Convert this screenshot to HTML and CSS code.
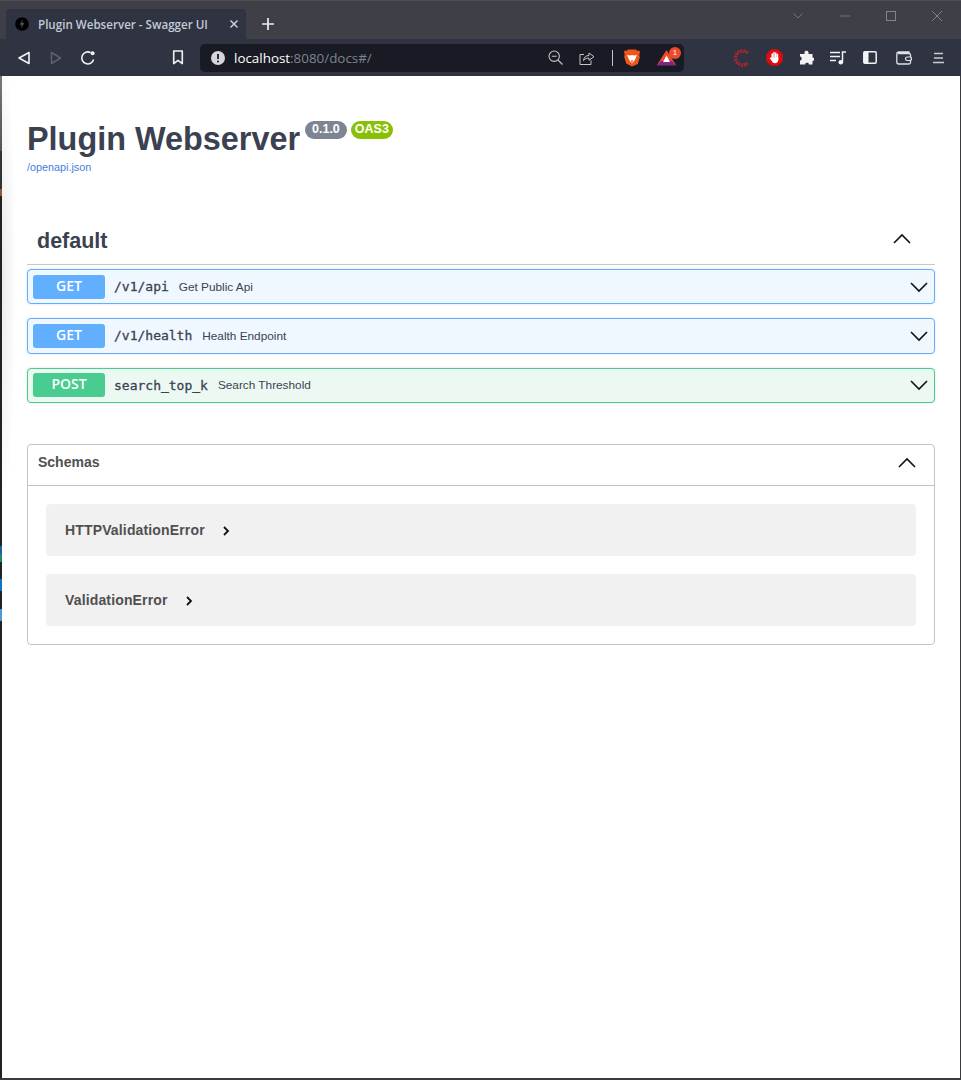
FILE: index.html
```html
<!DOCTYPE html>
<html lang="en">
<head>
    <meta charset="UTF-8">
    <title>Plugin Webserver - Swagger UI</title>
    <link rel="stylesheet" href="styles.css">
</head>
<body>
<div class="window">
    <div class="tabstrip">
        <div class="tab">
            <svg class="favicon" width="14" height="14" viewBox="0 0 14 14"><circle cx="7" cy="7" r="6.800" fill="#000"/><path d="M7.800 2.600 4.600 7.800h2.100l-.6 3.600 3.300-5.300H7.200z" fill="#4a5060"/></svg>
            <span class="tab-title">Plugin Webserver - Swagger UI</span>
            <svg class="tab-close" width="10" height="10" viewBox="0 0 10 10"><path d="M1.500 1.500l7 7M8.500 1.500l-7 7" stroke="#d5d8e0" stroke-width="1.400"/></svg>
        </div>
        <svg class="new-tab" width="14" height="14" viewBox="0 0 14 14"><path d="M7 1v12M1 7h12" stroke="#eceef2" stroke-width="1.700"/></svg>
        <div class="window-controls">
            <svg width="14" height="8" viewBox="0 0 14 8"><path d="M2.500 1.500l4.500 4.500 4.500-4.500" fill="none" stroke="#70747c" stroke-width="1"/></svg>
            <svg width="12" height="2" viewBox="0 0 12 2"><path d="M1 1h10" stroke="#70747c" stroke-width="1"/></svg>
            <svg width="12" height="12" viewBox="0 0 12 12"><rect x="1.500" y="1.500" width="9" height="9" fill="none" stroke="#80848c" stroke-width="1"/></svg>
            <svg width="12" height="12" viewBox="0 0 12 12"><path d="M1 1l10 10M11 1L1 11" stroke="#80848c" stroke-width="1"/></svg>
        </div>
    </div>

    <div class="toolbar">
        <div class="tool"><svg width="14" height="16" viewBox="0 0 14 16"><path d="M12 2.500v11L2 8z" fill="none" stroke="#f2f3f5" stroke-width="1.600" stroke-linejoin="round"/></svg></div>
        <div class="tool"><svg width="14" height="16" viewBox="0 0 14 16"><path d="M2.500 2.500v11l9-5.500z" fill="none" stroke="#5e626e" stroke-width="1.500" stroke-linejoin="round"/></svg></div>
        <div class="tool"><svg width="16" height="16" viewBox="0 0 16 16"><path d="M13.600 9.500A6 6 0 1 1 10.600 2.600" fill="none" stroke="#f2f3f5" stroke-width="1.600"/><circle cx="12.600" cy="3.200" r="2" fill="#f2f3f5"/></svg></div>
        <div class="tool tool-bookmark"><svg width="12" height="15" viewBox="0 0 12 15"><path d="M1.700 1h8.600v12.600L6 10.300l-4.300 3.300z" fill="none" stroke="#f2f3f5" stroke-width="1.600" stroke-linejoin="round"/></svg></div>

        <div class="urlbar">
            <svg class="info" width="14" height="14" viewBox="0 0 14 14"><circle cx="7" cy="7" r="7" fill="#d4d6db"/><path d="M7 3v5" stroke="#181b23" stroke-width="1.800"/><circle cx="7" cy="10.400" r="1" fill="#181b23"/></svg>
            <span class="url"><span class="host">localhost</span>:8080/docs#/</span>
            <svg class="url-zoom" width="15" height="15" viewBox="0 0 15 15"><circle cx="6.200" cy="6.200" r="5.200" fill="none" stroke="#c3c6cc" stroke-width="1.100"/><path d="M3.800 6.200h4.800M10 10l4.500 4.500" stroke="#c3c6cc" stroke-width="1.100"/></svg>
            <svg class="url-share" width="16" height="15" viewBox="0 0 16 15"><path d="M5 4.500H1v10h11v-4" fill="none" stroke="#c3c6cc" stroke-width="1"/><path d="M4.500 10.500C5 7 7 5.500 10 5.500V3l5 3.700-5 3.600V8C8 8 6 8.700 4.500 10.500z" fill="none" stroke="#c3c6cc" stroke-width="1" stroke-linejoin="round"/></svg>
            <span class="url-sep"></span>
            <svg class="brave" width="16" height="18" viewBox="0 0 16 18"><path d="M4 .5h8l1 1.200 2.400-.2.6 2-.8 2.200.6 2.500-2 6.800L8 17.500 2.200 14.500.2 7.700l.6-2.500L0 3.500l.6-2 2.400.2z" fill="#f1561f"/><path d="M3 6l3 .6L8 6l2 .6L13 6l-1.800 4.200L9.300 13 8 14l-1.300-1-1.900-2.800z" fill="#fff"/><path d="M6.600 12l1.400-1 1.400 1L8 13.300z" fill="#f1561f"/></svg>
            <div class="bat">
                <svg width="19" height="16" viewBox="0 0 19 16"><path d="M9.500 0L0 15h19z" fill="#ee4a2c"/><path d="M0 15.500l4-4.500h11l4 4.500z" fill="#7a2a86"/><path d="M9.500 5.500L6 12h7z" fill="#fff"/></svg>
                <span class="bat-count">1</span>
            </div>
        </div>

        <div class="tool tool-first"><svg width="20" height="18" viewBox="0 0 20 18"><path d="M15.500 4A7 7 0 1 0 15.500 14" fill="none" stroke="#b5262b" stroke-width="3.400" stroke-dasharray="1.800 1"/></svg></div>
        <div class="tool"><svg width="17" height="17" viewBox="0 0 17 17"><path d="M5 .3h7L16.700 5v7L12 16.700H5L.3 12V5z" fill="#e0090f"/><path d="M6.200 5v5M8 3.500V9M9.800 4V9M11.500 5.500v5" stroke="#fff" stroke-width="1.500" stroke-linecap="round"/><path d="M5.500 8.500h6.800v2.500c0 2-1.500 3.200-3.300 3.200-1.700 0-2.500-1-3-2L3.900 9.600c-.4-.8.5-1.400 1.100-.8z" fill="#fff"/></svg></div>
        <div class="tool"><svg width="15" height="15" viewBox="0 0 15 15"><path d="M5.500 2.500C5.500 0 9.500 0 9.500 2.500V4h4v3.500c2.200-.5 2.200 4 0 3.500V14.500H9.800c.5-2.200-4-2.200-3.500 0H1V10.500c2.200.5 2.200-4.500 0-4V4h4.500z" fill="#f2f3f5"/></svg></div>
        <div class="tool"><svg width="16" height="14" viewBox="0 0 16 14"><path d="M0 1.500h10M0 5.500h10M0 9.500h6" stroke="#f2f3f5" stroke-width="1.500"/><path d="M12.500 11V1H16" fill="none" stroke="#f2f3f5" stroke-width="1.500"/><circle cx="10.800" cy="11.200" r="2.300" fill="#f2f3f5"/></svg></div>
        <div class="tool"><svg width="14" height="13" viewBox="0 0 14 13"><rect x=".8" y=".8" width="12.400" height="11.400" rx="1" fill="none" stroke="#f2f3f5" stroke-width="1.500"/><rect x="1" y="1" width="4.500" height="11" fill="#f2f3f5"/></svg></div>
        <div class="tool tool-wallet"><svg width="16" height="14" viewBox="0 0 16 14"><path d="M13 2.500V1H3C1.500 1 .8 2 .8 3v8c0 1.200.9 2 2 2H13c1 0 1.500-.7 1.500-1.500V4c0-.9-.5-1.500-1.500-1.500H2" fill="none" stroke="#dfe1e6" stroke-width="1.300"/><rect x="9.500" y="6" width="6" height="3.500" rx="1.700" fill="#2f3342" stroke="#dfe1e6" stroke-width="1.200"/></svg></div>
        <div class="tool tool-menu"><svg width="11" height="12" viewBox="0 0 11 12"><path d="M1 1.500h9M1 6h9M0 10.500h11" stroke="#c9ccd3" stroke-width="1.600"/></svg></div>
    </div>

    <div class="page">
        <div class="info-block">
            <div class="title-row">
                <h2 class="title">Plugin Webserver</h2>
                <span class="badge badge-version">0.1.0</span>
                <span class="badge badge-oas">OAS3</span>
            </div>
            <a class="spec-link" href="#">/openapi.json</a>
        </div>

        <div class="tag-head">
            <h3 class="tag-name">default</h3>
            <svg class="chevron chevron-tag" width="20" height="20" viewBox="0 0 20 20"><path d="M2 14l8-8 8 8" fill="none" stroke="#111" stroke-width="1.600"/></svg>
        </div>

        <div class="op op-get">
            <span class="method">GET</span>
            <span class="path">/v1/api</span>
            <span class="summary">Get Public Api</span>
            <svg class="op-arrow" width="20" height="20" viewBox="0 0 20 20"><path d="M2 6l8 8 8-8" fill="none" stroke="#111" stroke-width="1.600"/></svg>
        </div>
        <div class="op op-get">
            <span class="method">GET</span>
            <span class="path">/v1/health</span>
            <span class="summary">Health Endpoint</span>
            <svg class="op-arrow" width="20" height="20" viewBox="0 0 20 20"><path d="M2 6l8 8 8-8" fill="none" stroke="#111" stroke-width="1.600"/></svg>
        </div>
        <div class="op op-post">
            <span class="method">POST</span>
            <span class="path">search_top_k</span>
            <span class="summary">Search Threshold</span>
            <svg class="op-arrow" width="20" height="20" viewBox="0 0 20 20"><path d="M2 6l8 8 8-8" fill="none" stroke="#111" stroke-width="1.600"/></svg>
        </div>

        <div class="schemas">
            <div class="schemas-head">
                <span class="schemas-title">Schemas</span>
                <svg class="chevron" width="20" height="20" viewBox="0 0 20 20"><path d="M2 14l8-8 8 8" fill="none" stroke="#111" stroke-width="1.600"/></svg>
            </div>
            <div class="schemas-body">
                <div class="model">
                    <span class="model-name">HTTPValidationError</span>
                    <svg class="model-arrow" width="8" height="12" viewBox="0 0 8 12"><path d="M2 2l4 4-4 4" fill="none" stroke="#111" stroke-width="1.800"/></svg>
                </div>
                <div class="model">
                    <span class="model-name">ValidationError</span>
                    <svg class="model-arrow" width="8" height="12" viewBox="0 0 8 12"><path d="M2 2l4 4-4 4" fill="none" stroke="#111" stroke-width="1.800"/></svg>
                </div>
            </div>
        </div>
    </div>
</div>
</body>
</html>
```

FILE: styles.css
```css
* {
    box-sizing: border-box;
}
body {
    margin: 0;
    font-family: "Liberation Sans", Arial, sans-serif;
    background: #fff;
}
svg {
    display: block;
    flex: none;
}
.window {
    display: flex;
    flex-direction: column;
    height: 1080px;
    border-bottom: 2px solid #3a3a3e;
}

/* browser chrome */
.tabstrip {
    display: flex;
    align-items: flex-end;
    height: 39px;
    padding-left: 6px;
    background: #3f3f47;
    border-top: 1px solid #4d4d52;
}
.tab {
    display: flex;
    align-items: center;
    width: 240px;
    height: 30px;
    padding: 0 7px 0 9px;
    background: #2f3342;
    border-radius: 4px 4px 0 0;
}
.tab-title {
    margin-left: 9px;
    font-family: "Open Sans", sans-serif;
    font-size: 11.600px;
    font-weight: 600;
    color: #c3cad6;
    white-space: nowrap;
}
.tab-close {
    margin-left: auto;
}
.new-tab {
    margin: 0 0 8px 15px;
}
.window-controls {
    display: flex;
    align-items: center;
    gap: 34px;
    margin-left: auto;
    align-self: flex-start;
    height: 30px;
    padding-right: 18px;
}
.toolbar {
    display: flex;
    align-items: center;
    height: 37px;
    padding-left: 8px;
    background: #2f3342;
}
.tool {
    display: flex;
    align-items: center;
    justify-content: center;
    width: 32px;
    height: 32px;
}
.tool-bookmark {
    margin-left: 58px;
}
.tool-first {
    margin-left: 42px;
}
.tool-wallet {
    margin-left: 2px;
}
.tool-menu {
    margin-left: 2px;
}
.urlbar {
    display: flex;
    align-items: center;
    width: 484px;
    height: 28px;
    margin-left: 6px;
    padding: 0 0 0 11px;
    background: #181b23;
    border-radius: 5px;
}
.url {
    margin-left: 9px;
    font-family: "Open Sans", sans-serif;
    font-size: 13.400px;
    color: #7f838c;
}
.host {
    color: #fff;
}
.url-zoom {
    margin-left: auto;
}
.url-share {
    margin-left: 16px;
}
.url-sep {
    width: 1px;
    height: 16px;
    margin-left: 17px;
    background: #c3c6cc;
}
.brave {
    margin-left: 11px;
}
.bat {
    position: relative;
    margin: 0 8px 0 17px;
}
.bat-count {
    position: absolute;
    top: -3px;
    right: -5px;
    width: 12px;
    height: 12px;
    border-radius: 50%;
    background: #ee4a2c;
    color: #fff;
    font-size: 8px;
    line-height: 12px;
    text-align: center;
}

/* swagger page, the left edge shows the window behind it */
.page {
    flex: 1;
    padding: 0 25px 0 27px;
    margin: 0 1px 0 0;
    background-color: #fff;
    background-image:
        linear-gradient(#777 0, #555 75px, #333 75px, #333 113px, #8a5a3a 113px, #8a5a3a 120px, #222 120px, #222 470px, #1c5fa8 470px, #1c5fa8 478px, #1f8a5c 478px, #1f8a5c 486px, #222 486px, #222 503px, #1273c4 503px, #1273c4 515px, #222 515px, #222 533px, #4a9ad4 533px, #4a9ad4 545px, #222 545px),
        radial-gradient(ellipse 14px 240px at 2px 200px, #ebebeb, rgba(255, 255, 255, 0));
    background-size: 2px 100%, 20px 100%;
    background-repeat: no-repeat;
    box-shadow: 1px 0 0 #3a3a3e;
}
.info-block {
    padding-top: 43px;
}
.title-row {
    display: flex;
    align-items: flex-start;
}
.title {
    margin: 0;
    font-size: 32.400px;
    line-height: 40px;
    font-weight: bold;
    color: #3b4151;
}
.badge {
    height: 18px;
    margin-top: 2px;
    padding: 0 4px;
    border-radius: 9px;
    font-size: 12.500px;
    line-height: 17px;
    font-weight: bold;
    color: #fff;
    background: #7d8492;
}
.badge-version {
    margin-left: 5px;
    padding: 0 7px;
}
.badge-oas {
    margin-left: 4px;
    background: #89bf04;
}
.spec-link {
    display: block;
    margin-top: 1px;
    font-size: 10.800px;
    line-height: 14px;
    color: #4580e0;
    text-decoration: none;
}
.tag-head {
    display: flex;
    align-items: center;
    justify-content: space-between;
    height: 50px;
    margin: 41px 0 4px;
    padding: 4px 23px 0 10px;
    border-bottom: 1px solid #c8c9cc;
}
.tag-name {
    margin: 0;
    font-size: 21.500px;
    font-weight: bold;
    color: #3b4151;
}
.chevron-tag {
    margin-top: -6px;
}
.op {
    display: flex;
    align-items: center;
    height: 35.300px;
    margin-bottom: 14px;
    padding: 0 5px;
    border: 1px solid;
    border-radius: 4px;
    box-shadow: 0 0 3px rgba(0, 0, 0, .12);
}
.op-get {
    background: #eff7ff;
    border-color: #61affe;
}
.op-post {
    background: #ebf9f2;
    border-color: #49cc90;
}
.method {
    width: 72px;
    height: 24px;
    border-radius: 3px;
    font-family: "Open Sans", sans-serif;
    font-size: 14px;
    line-height: 22px;
    font-weight: 600;
    color: #fff;
    text-align: center;
}
.op-get .method {
    background: #61affe;
}
.op-post .method {
    background: #49cc90;
}
.path {
    margin-left: 9px;
    font-family: "DejaVu Sans Mono", monospace;
    font-size: 13px;
    -webkit-text-stroke: .3px #3b4151;
    color: #3b4151;
}
.summary {
    margin-left: 10px;
    font-size: 11.800px;
    color: #3b4151;
}
.op-arrow {
    margin-left: auto;
}
.schemas {
    margin-top: 41.100px;
    border: 1px solid #c4c4c6;
    border-radius: 4px;
}
.schemas-head {
    display: flex;
    align-items: center;
    justify-content: space-between;
    height: 41px;
    padding: 0 17px 3px 10px;
    border-bottom: 1px solid #c4c4c6;
}
.schemas-title {
    margin-top: -2px;
    font-size: 14px;
    font-weight: bold;
    color: #505050;
}
.schemas-body {
    display: flex;
    flex-direction: column;
    gap: 18px;
    padding: 18px;
}
.model {
    display: flex;
    align-items: center;
    gap: 17px;
    height: 52px;
    padding-left: 19px;
    background: #f1f1f1;
    border-radius: 4px;
}
.model-name {
    font-size: 14px;
    font-weight: bold;
    letter-spacing: .15px;
    color: #505050;
}
.model-arrow {
    margin-top: 3px;
}
```
